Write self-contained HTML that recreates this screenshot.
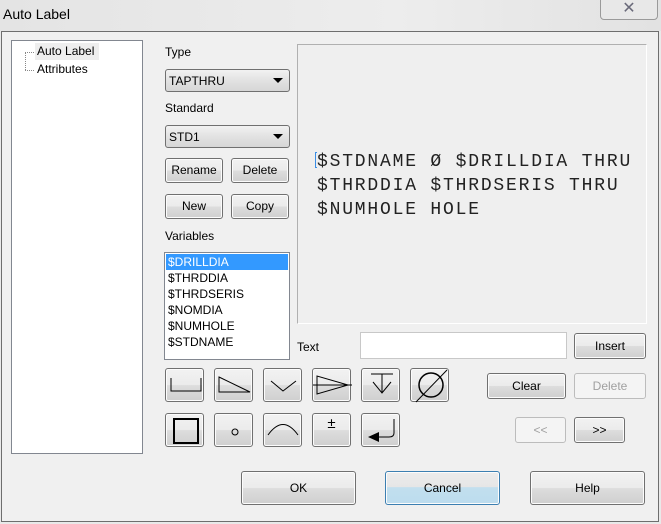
<!DOCTYPE html>
<html><head><style>
*{box-sizing:border-box;margin:0;padding:0}
body{width:661px;height:524px;background:#e9e9e9;font-family:"Liberation Sans",sans-serif;font-size:12px;position:relative;overflow:hidden;color:#000}
.a{position:absolute}
.btn{position:absolute;border:1px solid #707070;border-radius:3px;background:linear-gradient(#f2f2f2 0%,#ebebeb 50%,#dddddd 51%,#cfcfcf 100%);text-align:center;font-size:12px;box-shadow:inset 0 0 0 1px #fcfcfc}
.dis{border-color:#bcbcbc;color:#a0a0a0;background:#f4f4f4;box-shadow:none}
.lbl{position:absolute;font-size:12px}
.combo{position:absolute;border:1px solid #707070;border-radius:3px;background:linear-gradient(#f2f2f2,#e2e2e2 50%,#d6d6d6);padding:4px 0 0 3px}
.combo:after{content:"";position:absolute;right:6px;top:8px;border-left:5px solid transparent;border-right:5px solid transparent;border-top:5px solid #000}
.ib{position:absolute;width:39px;height:34px}
.ib svg{position:absolute;left:0;top:0}
</style></head><body>
<div class="a" style="left:0;top:0;width:661px;height:31px;background:linear-gradient(90deg,#e4e4e4,#ededed 60%,#e2e2e2)"></div>
<div class="lbl" style="left:3px;top:6px;font-size:14px">Auto Label</div>
<div class="a" style="left:600px;top:-2px;width:58px;height:22px;border:1px solid #9a9a9a;border-radius:0 0 4px 4px;background:#e8e8e8;text-align:center;font-size:16px;color:#6a6a7a;line-height:20px">✕</div>
<div class="a" style="left:1px;top:31px;width:658px;height:491px;border:1px solid #6e6e6e;background:#f0f0f0"></div>
<div class="a" style="left:11px;top:40px;width:132px;height:414px;border:1px solid #828790;background:#fff"></div>
<div class="a" style="left:25px;top:52px;width:1px;height:18px;border-left:1px dotted #888"></div>
<div class="a" style="left:25px;top:52px;width:9px;border-top:1px dotted #888"></div>
<div class="a" style="left:25px;top:70px;width:9px;border-top:1px dotted #888"></div>
<div class="a" style="left:35px;top:43px;width:64px;height:17px;background:#eee"></div>
<div class="lbl" style="left:37px;top:44px">Auto Label</div>
<div class="lbl" style="left:37px;top:62px">Attributes</div>

<div class="lbl" style="left:165px;top:45px">Type</div>
<div class="combo" style="left:165px;top:69px;width:125px;height:23px">TAPTHRU</div>
<div class="lbl" style="left:165px;top:101px">Standard</div>
<div class="combo" style="left:165px;top:125px;width:125px;height:23px">STD1</div>
<div class="btn" style="left:165px;top:158px;width:58px;height:25px;line-height:23px">Rename</div>
<div class="btn" style="left:231px;top:158px;width:58px;height:25px;line-height:23px">Delete</div>
<div class="btn" style="left:165px;top:194px;width:58px;height:25px;line-height:23px">New</div>
<div class="btn" style="left:231px;top:194px;width:58px;height:25px;line-height:23px">Copy</div>
<div class="lbl" style="left:165px;top:229px">Variables</div>
<div class="a" style="left:164px;top:252px;width:126px;height:108px;border:1px solid #828790;background:#fff;padding:1px;line-height:16px;font-size:12px">
<div style="background:#3399ff;color:#fff;padding-left:2px">$DRILLDIA</div>
<div style="padding-left:2px">$THRDDIA</div><div style="padding-left:2px">$THRDSERIS</div><div style="padding-left:2px">$NOMDIA</div><div style="padding-left:2px">$NUMHOLE</div><div style="padding-left:2px">$STDNAME</div></div>

<div class="a" style="left:297px;top:44px;width:350px;height:280px;border:1px solid #b0b0b0;border-right-color:#fff;border-bottom-color:#fff;background:#efefef"></div>
<div class="a" style="left:315px;top:152px;width:2px;height:16px;border:1px solid #3a8ee6;border-right:none"></div>
<div class="a" style="left:317px;top:150px;font-family:'Liberation Mono',monospace;font-size:18px;line-height:24px;letter-spacing:1.8px;color:#222;white-space:nowrap">$STDNAME Ø $DRILLDIA THRU<br>$THRDDIA $THRDSERIS THRU<br>$NUMHOLE HOLE</div>

<div class="lbl" style="left:297px;top:340px">Text</div>
<div class="a" style="left:360px;top:332px;width:207px;height:27px;border:1px solid #c8c8c8;background:#fff"></div>
<div class="btn" style="left:574px;top:333px;width:72px;height:26px;line-height:24px">Insert</div>

<div class="btn ib" style="left:165px;top:368px"><svg width="39" height="34"><path d="M5 9V22H35V9" stroke="#000" fill="none"/></svg></div>
<div class="btn ib" style="left:214px;top:368px"><svg width="39" height="34"><path d="M4 8V23H35ZM4 8L35 23" stroke="#000" fill="none"/></svg></div>
<div class="btn ib" style="left:263px;top:368px"><svg width="39" height="34"><path d="M7 12L19 22L32 12" stroke="#000" fill="none"/></svg></div>
<div class="btn ib" style="left:312px;top:368px"><svg width="39" height="34"><path d="M4 7V25L35 16ZM0 16H39" stroke="#000" fill="none"/></svg></div>
<div class="btn ib" style="left:361px;top:368px"><svg width="39" height="34"><path d="M9 5H31M20 5V24M11 13L20 24L29 13" stroke="#000" fill="none"/></svg></div>
<div class="btn ib" style="left:410px;top:368px"><svg width="39" height="34"><circle cx="20" cy="16" r="12" stroke="#000" stroke-width="1.5" fill="none"/><path d="M5 33L36 1" stroke="#000"/></svg></div>
<div class="btn ib" style="left:165px;top:413px"><svg width="39" height="34"><rect x="8" y="5" width="24" height="24" stroke="#000" stroke-width="2" fill="none"/></svg></div>
<div class="btn ib" style="left:214px;top:413px"><svg width="39" height="34"><circle cx="20" cy="18" r="3" stroke="#000" fill="none"/></svg></div>
<div class="btn ib" style="left:263px;top:413px"><svg width="39" height="34"><path d="M4 21Q19 0 34 21" stroke="#000" fill="none"/></svg></div>
<div class="btn ib" style="left:312px;top:413px;font-size:15px;line-height:20px">±</div>
<div class="btn ib" style="left:361px;top:413px"><svg width="39" height="34"><path d="M32 5V19Q32 23 27 23H17" stroke="#000" fill="none"/><path d="M6 23L17 18V28Z" fill="#000"/></svg></div>

<div class="btn" style="left:487px;top:373px;width:79px;height:26px;line-height:24px">Clear</div>
<div class="btn dis" style="left:574px;top:373px;width:72px;height:26px;line-height:24px">Delete</div>
<div class="btn dis" style="left:515px;top:417px;width:51px;height:26px;line-height:24px">&lt;&lt;</div>
<div class="btn" style="left:574px;top:417px;width:51px;height:26px;line-height:24px">&gt;&gt;</div>

<div class="btn" style="left:241px;top:471px;width:115px;height:34px;line-height:32px">OK</div>
<div class="btn" style="left:385px;top:471px;width:115px;height:34px;line-height:32px;border-color:#3c7fb1;background:linear-gradient(#ececec 0%,#e6e6e6 47%,#c2dfee 48%,#bcdcee 100%)">Cancel</div>
<div class="btn" style="left:530px;top:471px;width:115px;height:34px;line-height:32px">Help</div>
</body></html>
